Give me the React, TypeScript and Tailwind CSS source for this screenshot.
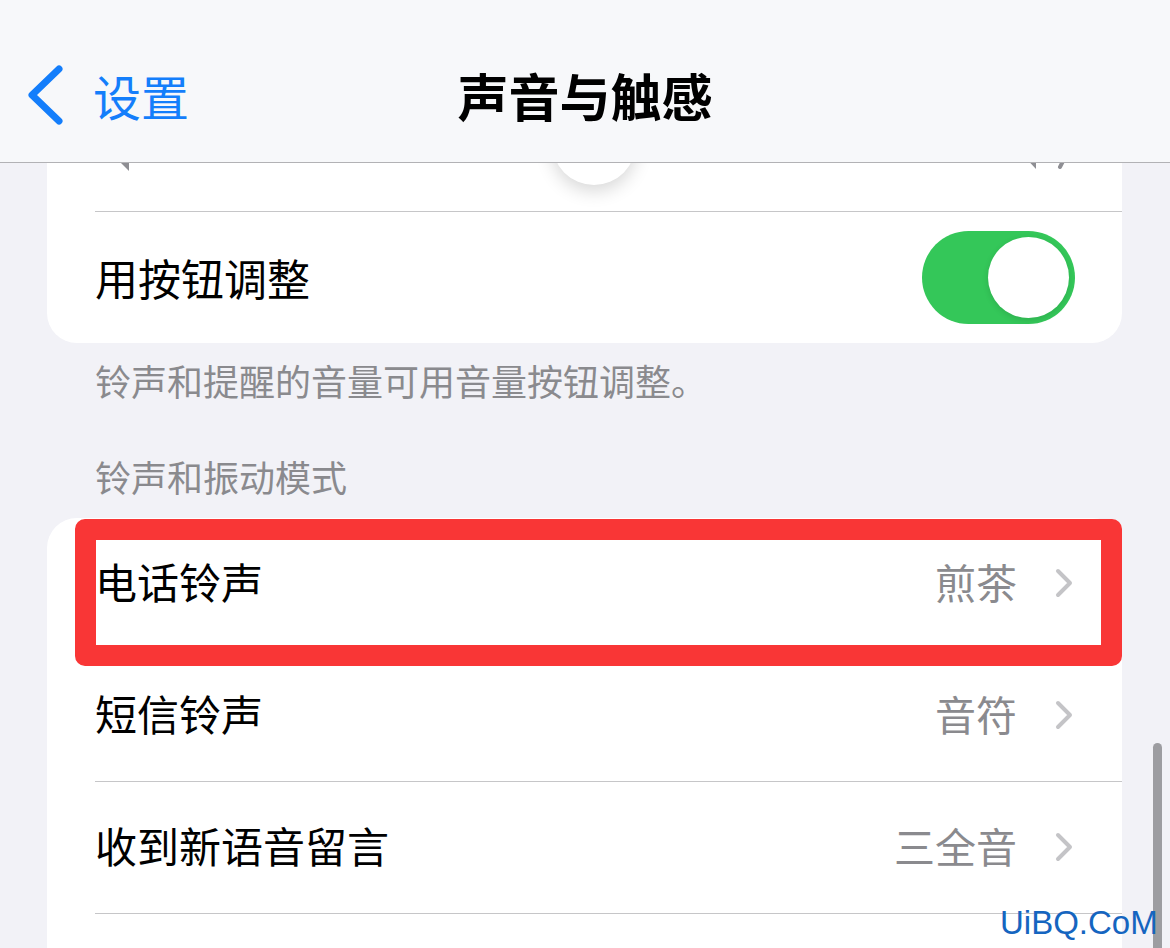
import React from 'react'

const font = { fontFamily: '"Noto Sans CJK SC", "Noto Sans", sans-serif' }

const Chevron: React.FC = () => (
  <svg width="18" height="30" viewBox="0 0 18 30" fill="none">
    <path d="M3 3 L15 15 L3 27" stroke="#c4c4c7" strokeWidth="4" strokeLinecap="round" strokeLinejoin="round" />
  </svg>
)

const Divider: React.FC = () => <div className="ml-[48px] h-px bg-[#c6c6c8]" />

const ValueRow: React.FC<{ label: string; value: string }> = ({ label, value }) => (
  <div className="flex h-[131px] items-center justify-between pb-[5px] pl-[48px] pr-[49px]">
    <span className="text-[42px] leading-none text-black">{label}</span>
    <div className="flex items-center gap-[38px]">
      <span className="text-[41px] leading-none text-[#8a8a8e]">{value}</span>
      <div className="mt-[4px]">
        <Chevron />
      </div>
    </div>
  </div>
)

const App: React.FC = () => {
  return (
    <div className="relative h-[948px] w-[1170px] overflow-hidden bg-[#f2f2f7]" style={font}>
      <div className="px-[47px] pr-[48px]">
        {/* volume card */}
        <div className="mt-[75px] overflow-hidden rounded-[30px] bg-white">
          <div className="flex h-[136px] items-center px-[50px]">
            <svg width="40" height="60" viewBox="0 0 40 60" fill="#8e8e93">
              <path d="M6 20 h8 l18 -18 v56 l-18 -18 h-8 a4 4 0 0 1 -4 -4 v-12 a4 4 0 0 1 4 -4z" />
            </svg>
            <div className="relative mx-[40px] h-[10px] flex-1 rounded-full bg-[#e5e5ea]">
              <div className="absolute left-[calc(50%+20px)] top-1/2 h-[84px] w-[84px] -translate-x-1/2 -translate-y-1/2 rounded-full bg-white shadow-[0_6px_18px_rgba(0,0,0,0.16)]" />
            </div>
            <svg width="62" height="60" viewBox="0 0 62 60" fill="none">
              <path d="M4 20 h7 l15 -16 v52 l-15 -16 h-7 a3 3 0 0 1 -3 -3 v-14 a3 3 0 0 1 3 -3z" fill="#8e8e93" />
              <path d="M34 22 q4 8 0 16" stroke="#8e8e93" strokeWidth="4" strokeLinecap="round" />
              <path d="M42 14 q9 16 0 32" stroke="#8e8e93" strokeWidth="4" strokeLinecap="round" />
              <path d="M50 6 q14 24 0 48" stroke="#8e8e93" strokeWidth="4" strokeLinecap="round" />
            </svg>
          </div>
          <Divider />
          <div className="flex h-[131px] items-center justify-between pl-[48px] pr-[47px]">
            <span className="text-[43px] leading-none text-black">用按钮调整</span>
            <div className="flex h-[93px] w-[153px] items-center justify-end rounded-full bg-[#34c759] pr-[6px]">
              <div className="h-[81px] w-[81px] rounded-full bg-white shadow-[0_2px_6px_rgba(0,0,0,0.12)]" />
            </div>
          </div>
        </div>

        <p className="pl-[48px] pt-[19px] text-[36px] leading-[36px] text-[#8a8a8e]">
          铃声和提醒的音量可用音量按钮调整。
        </p>
        <p className="mt-[60px] pl-[48px] text-[36px] leading-[36px] text-[#8a8a8e]">铃声和振动模式</p>

        {/* ringtone card */}
        <div className="relative mt-[24px] rounded-t-[30px] bg-white">
          <ValueRow label="电话铃声" value="煎茶" />
          <Divider />
          <ValueRow label="短信铃声" value="音符" />
          <Divider />
          <ValueRow label="收到新语音留言" value="三全音" />
          <Divider />
          <div className="h-[131px]" />
          <div className="absolute left-[28px] top-px h-[147px] w-[1047px] rounded-[10px] border-[21px] border-[#f93636]" />
        </div>
      </div>

      {/* nav bar */}
      <div className="absolute inset-x-0 top-0 grid h-[163px] grid-cols-[1fr_auto_1fr] items-center border-b border-[#b2b2b5] bg-[#f7f8fa] pt-[28px]">
        <div className="flex items-center pl-[26px]">
          <svg width="38" height="60" viewBox="0 0 38 60" fill="none">
            <path d="M33 4 L6 30 L33 56" stroke="#147efb" strokeWidth="7" strokeLinecap="round" strokeLinejoin="round" />
          </svg>
          <span className="ml-[29px] text-[48px] leading-none text-[#147efb]">设置</span>
        </div>
        <span className="text-[51px] font-bold leading-none text-black">声音与触感</span>
        <div />
      </div>

      <div className="absolute right-[8px] top-[743px] h-[240px] w-[9px] rounded-full bg-[#9d9da1]" />
      <span
        className="absolute left-[1000px] top-[903px] text-[33px] leading-[40px] text-[#1565c0]"
        style={{ fontFamily: '"Liberation Sans", Arial, sans-serif' }}
      >
        UiBQ.CoM
      </span>
    </div>
  )
}

export default App
